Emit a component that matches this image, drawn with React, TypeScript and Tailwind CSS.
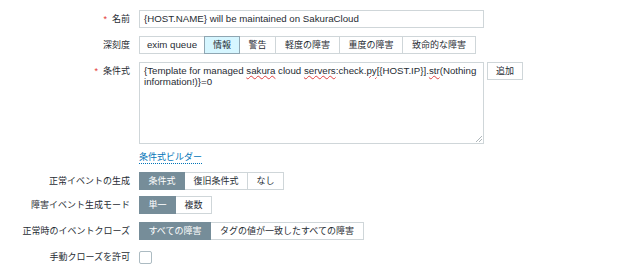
import React from "react";

type SegItem = { label: string; width: string; latin?: boolean };

function Row({
  label,
  required,
  children,
}: {
  label: string;
  required?: boolean;
  children: React.ReactNode;
}) {
  return (
    <div className="flex items-start">
      <div className="w-[130px] shrink-0 text-right leading-[18px] whitespace-nowrap">
        {required && <span className="text-[#e33734] mr-[5px]">*</span>}
        {label}
      </div>
      <div className="ml-[9px]">{children}</div>
    </div>
  );
}

function Segmented({
  items,
  active,
  severity,
}: {
  items: SegItem[];
  active: number;
  severity?: boolean;
}) {
  return (
    <div className="flex h-[18px]">
      {items.map((item, i) => {
        const isActive = i === active;
        let cls =
          "h-[18px] flex items-center justify-center border leading-none whitespace-nowrap ";
        if (i > 0) cls += "-ml-px ";
        if (item.latin) cls += "text-[9.7px] ";
        if (isActive && severity) {
          cls += "bg-[#d6f6ff] border-[#8fa6b2] relative z-10";
        } else if (isActive) {
          cls += "bg-[#768d99] border-[#768d99] text-white relative z-10";
        } else {
          cls += "bg-white border-[#cfd6d9]";
        }
        return (
          <div key={item.label} className={cls + " " + item.width}>
            {item.label}
          </div>
        );
      })}
    </div>
  );
}

function Squiggle({ children }: { children: React.ReactNode }) {
  return (
    <span className="underline decoration-wavy decoration-[#e04040] decoration-[0.5px] underline-offset-[1px]">
      {children}
    </span>
  );
}

export default function App() {
  return (
    <div className="w-[630px] h-[272px] bg-white text-[9px] text-[#1f2c33] font-['Liberation_Sans','Noto_Sans_CJK_JP',sans-serif] overflow-hidden">
      <div className="flex flex-col pt-[10px]">
        <Row label="名前" required>
          <div className="w-[345px] h-[18px] border border-[#cfd6d9] bg-white px-[4px] text-[9.7px] leading-[16px] whitespace-nowrap">
            {"{HOST.NAME} will be maintained on SakuraCloud"}
          </div>
        </Row>

        <div className="mt-[8px]">
          <Row label="深刻度">
            <Segmented
              severity
              active={1}
              items={[
                { label: "exim queue", width: "w-[66px]", latin: true },
                { label: "情報", width: "w-[36px]" },
                { label: "警告", width: "w-[37px]" },
                { label: "軽度の障害", width: "w-[65px]" },
                { label: "重度の障害", width: "w-[64px]" },
                { label: "致命的な障害", width: "w-[74px]" },
              ]}
            />
          </Row>
        </div>

        <div className="mt-[8px]">
          <Row label="条件式" required>
            <div className="flex items-start gap-[3px]">
              <div className="relative w-[345px] h-[82px] border border-[#cfd6d9] bg-white px-[4px] pt-[3px] text-[9.7px] leading-[10.5px]">
                {"{Template for managed "}
                <Squiggle>sakura</Squiggle>
                {" cloud "}
                <Squiggle>servers</Squiggle>
                {":check."}
                <Squiggle>py</Squiggle>
                {"[{HOST.IP}]."}
                <Squiggle>str</Squiggle>
                {"(Nothing"}
                <br />
                {"information!)}=0"}
                <svg
                  className="absolute right-[1px] bottom-[1px]"
                  width="7"
                  height="7"
                  viewBox="0 0 7 7"
                >
                  <line x1="1" y1="7" x2="7" y2="1" stroke="#9aa5aa" strokeWidth="0.8" />
                  <line x1="4" y1="7" x2="7" y2="4" stroke="#9aa5aa" strokeWidth="0.8" />
                </svg>
              </div>
              <div className="w-[36px] h-[18px] border border-[#cfd6d9] bg-white flex items-center justify-center leading-none">
                追加
              </div>
            </div>
          </Row>
        </div>

        <div className="mt-[4px] flex">
          <div className="w-[130px] shrink-0" />
          <div className="ml-[9px] leading-[18px]">
            <span className="text-[#0275b8] border-b border-dotted border-[#0275b8] pb-[1px]">
              条件式ビルダー
            </span>
          </div>
        </div>

        <div className="mt-[6px]">
          <Row label="正常イベントの生成">
            <Segmented
              active={0}
              items={[
                { label: "条件式", width: "w-[46px]" },
                { label: "復旧条件式", width: "w-[64px]" },
                { label: "なし", width: "w-[37px]" },
              ]}
            />
          </Row>
        </div>

        <div className="mt-[6px]">
          <Row label="障害イベント生成モード">
            <Segmented
              active={0}
              items={[
                { label: "単一", width: "w-[37px]" },
                { label: "複数", width: "w-[37px]" },
              ]}
            />
          </Row>
        </div>

        <div className="mt-[8px]">
          <Row label="正常時のイベントクローズ">
            <Segmented
              active={0}
              items={[
                { label: "すべての障害", width: "w-[72px]" },
                { label: "タグの値が一致したすべての障害", width: "w-[154px]" },
              ]}
            />
          </Row>
        </div>

        <div className="mt-[8px]">
          <Row label="手動クローズを許可">
            <div className="h-[18px] flex items-center">
              <div className="w-[13px] h-[13px] border border-[#acbbc2] rounded-[2px] bg-white" />
            </div>
          </Row>
        </div>
      </div>
    </div>
  );
}
